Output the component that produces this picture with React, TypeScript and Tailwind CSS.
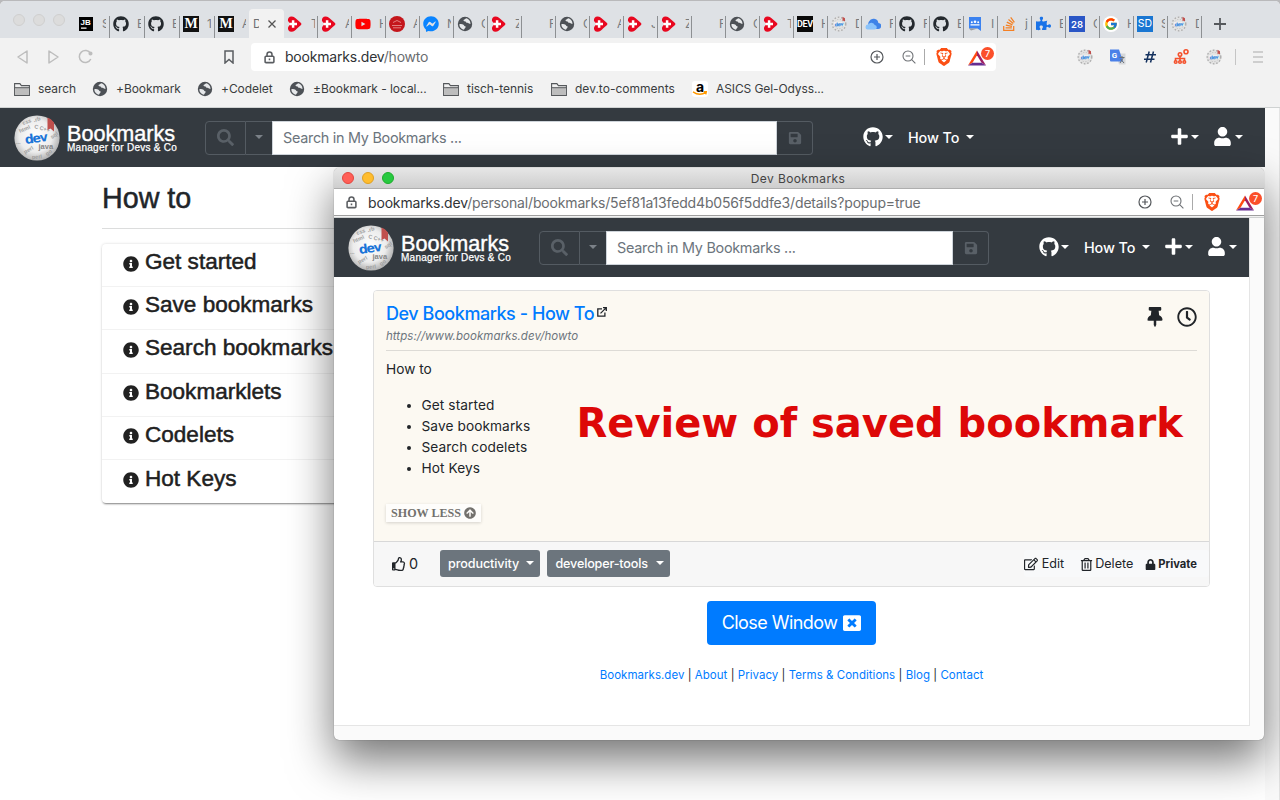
import React from "react";
import {
  FaArrowCircleUp,
  FaFacebookMessenger,
  FaGithub,
  FaInfoCircle,
  FaLock,
  FaPlus,
  FaPuzzlePiece,
  FaRegClock,
  FaRegEdit,
  FaRegThumbsUp,
  FaRegTrashAlt,
  FaSave,
  FaSearch,
  FaStackOverflow,
  FaThumbtack,
  FaUser,
  FaWindowClose,
  FaYoutube,
} from "react-icons/fa";
import { FcGoogle } from "react-icons/fc";
import { SiBrave } from "react-icons/si";

const SANS = "font-['Inter','Liberation_Sans',sans-serif]";
const HELV = "font-['Liberation_Sans',sans-serif]";

function Caret({ className = "text-white" }: { className?: string }) {
  return (
    <svg viewBox="0 0 8 4" className={`h-[4px] w-[8px] shrink-0 ${className}`}>
      <path d="M0 0h8L4 4z" fill="currentColor" />
    </svg>
  );
}

function DevBall({ className }: { className: string }) {
  return (
    <svg viewBox="0 0 46 46" className={`shrink-0 ${className}`}>
      <defs>
        <radialGradient id="ball" cx="47%" cy="45%" r="56%">
          <stop offset="0" stopColor="#ffffff" />
          <stop offset="0.65" stopColor="#ececec" />
          <stop offset="1" stopColor="#b0b0b0" />
        </radialGradient>
      </defs>
      <circle cx="23" cy="23" r="22.6" fill="url(#ball)" />
      <g fontFamily="Liberation Sans" fontWeight="bold" fill="#9c9c9c" fontSize="5.500">
        <text x="6" y="18" transform="rotate(-24 6 18)">html</text>
        <text x="9" y="10" transform="rotate(-18 9 10)">css</text>
        <text x="20" y="13" transform="rotate(16 20 13)">C C++</text>
        <text x="20" y="7" transform="rotate(-14 20 7)">.rb</text>
        <text x="2" y="29">...</text>
        <text x="11" y="39" transform="rotate(-30 11 39)">perl</text>
        <text x="18" y="44" transform="rotate(-4 18 44)">perl</text>
        <text x="38" y="24" transform="rotate(-35 38 24)">sql</text>
        <text x="33" y="41" transform="rotate(-35 33 41)">go</text>
      </g>
      <text x="24.500" y="34" fontFamily="Liberation Sans" fontWeight="bold" fontSize="7.5" fill="#858585">java</text>
      <text x="11.500" y="29" transform="rotate(-8 11.500 29)" fontFamily="DejaVu Sans" fontWeight="bold" fontSize="12.5" textLength="23" fill="#1b75d8">dev</text>
      <path d="M33.5 2.5q3.500 1 6.500 5v9l-3.500-3-3 1.500z" fill="#c0504d" />
    </svg>
  );
}

function MiniBall() {
  return (
    <svg viewBox="0 0 16 16" className="size-4 shrink-0">
      <circle cx="8" cy="8" r="7.600" fill="#e3e3e3" />
      <circle cx="8" cy="8" r="6.800" fill="none" stroke="#aaa" strokeWidth="1.300" strokeDasharray="1.600 1.800" />
      <circle cx="8" cy="8" r="4.700" fill="none" stroke="#bbb" strokeWidth="0.800" strokeDasharray="1.300 1.500" />
      <rect x="3" y="5.800" width="10" height="4.200" fill="#efefef" />
      <text x="3.500" y="10" transform="rotate(-6 8 8)" fontFamily="DejaVu Sans" fontWeight="bold" fontSize="5" textLength="9" fill="#2f84dc">dev</text>
      <path d="M11.500.8l2.500 1.500v3.200l-1.300-.8-1.200.3z" fill="#c0504d" />
    </svg>
  );
}

function Heart() {
  return (
    <svg viewBox="0 0 16 16" className="size-4 shrink-0">
      <path d="M4.500 0.400C7 .4 8.500 2 10 3.600L14 7.100q.9.900 0 1.800L10 12.500C8.400 14.200 7 15.800 4.500 15.800 1.800 15.800.8 13.700 1 11.900c.1-1.500 1.600-2.200 1.600-3.900S1 5.500.9 4.200C.8 2.300 2 .4 4.500.4z" fill="#e8071f" />
      <path d="M2.200 8h7.800M6.100 4.200v7.600" stroke="#fff" strokeWidth="2.500" />
    </svg>
  );
}

function Globe() {
  return (
    <svg viewBox="0 0 16 16" className="size-4 shrink-0">
      <circle cx="8" cy="8" r="7.200" fill="#4d5156" />
      <path d="M2.300 8.200c1.500-.3 3.200-.2 4.200.5.900.6.500 1.300 1.500 1.500 1 .2 1 1 .2 1.600-.7.500-.5 1.600-1.400 1.900C4.200 13 2.300 11 2.300 8.200zM9.400 2.300c-1.200.2-1 1.100-2 1.300-.9.200-1.300 1-.5 1.500.6.400 1.600.3 2 1 .3.700 1.300.9 2.100.9.900 0 1.300 1 2.500.9C13.500 5 11.700 2.800 9.400 2.300z" fill="#e6e8ea" />
    </svg>
  );
}

function Square({ bg, children }: { bg: string; children: React.ReactNode }) {
  return <span className={`flex size-4 shrink-0 items-center justify-center leading-none text-white ${bg}`}>{children}</span>;
}

const medium = (
  <Square bg="bg-[#111]">
    <span className="pt-[1px] font-['Liberation_Serif',serif] text-[14px] font-bold leading-none">M</span>
  </Square>
);
const github = <FaGithub className="size-4 shrink-0 text-[#24292e]" />;

const leftTabs: [React.ReactNode, string][] = [
  [
    <svg viewBox="0 0 14 14" className="size-[14px] shrink-0">
      <path d="M0 0h14v14H0z" />
      <text x="1.500" y="8.200" fontFamily="Liberation Sans" fontWeight="bold" fontSize="8" fill="#fff">JB</text>
      <path d="M2 11.200h5.500" stroke="#fff" strokeWidth="1.200" />
    </svg>,
    "S",
  ],
  [github, "B"],
  [github, "B"],
  [medium, "1"],
  [medium, "A"],
];

const rightTabs: [React.ReactNode, string][] = [
  [<Heart />, "T"],
  [<Heart />, "A"],
  [<FaYoutube className="size-4 shrink-0 text-[#f00]" />, "H"],
  [
    <svg viewBox="0 0 16 16" className="size-4 shrink-0">
      <circle cx="8" cy="8" r="8" fill="#c4161c" />
      <path d="M4 6.500l4-2 4 2M3 9.500h10M4 11.800h8" stroke="#e8999b" fill="none" strokeWidth=".8" />
    </svg>,
    "A",
  ],
  [<FaFacebookMessenger className="size-4 shrink-0 text-[#0a84ff]" />, "N"],
  [<Globe />, "C"],
  [<Heart />, "Z"],
  [<span className="size-4 shrink-0" />, "F"],
  [<Globe />, "C"],
  [<Heart />, "A"],
  [<Heart />, "J"],
  [<Heart />, "Z"],
  [<span className="size-4 shrink-0" />, "F"],
  [<Globe />, "C"],
  [<Heart />, "T"],
  [
    <Square bg="bg-[#0a0a0a]">
      <span className="pt-[1px] font-['Roboto',sans-serif] text-[9px] font-bold tracking-[-0.3px]">DEV</span>
    </Square>,
    "H",
  ],
  [<MiniBall />, "D"],
  [
    <svg viewBox="0 0 16 16" className="size-4 shrink-0">
      <path d="M6 13h7a3 3 0 0 0 .4-6A5 5 0 0 0 4 5.500 4 4 0 0 0 3.500 9z" fill="#3f83e8" />
      <path d="M2.800 13.500h6.700a2.200 2.200 0 0 0 .2-4.400A3.500 3.500 0 0 0 3.300 8.500a2.500 2.500 0 0 0-.5 5z" fill="#8cc4fb" />
    </svg>,
    "F",
  ],
  [github, "F"],
  [github, "B"],
  [
    <svg viewBox="0 0 16 16" className="size-4 shrink-0">
      <path d="M2 1h12v14l-3.500-2.500H2z" fill="#3b82f0" />
      <path d="M2 12.500h8.500L4 14.500z" fill="#9a9a9a" />
      <circle cx="8" cy="5.700" r="1.300" fill="#fff" />
      <circle cx="4.800" cy="6.300" r="1" fill="#fff" />
      <circle cx="11.200" cy="6.300" r="1" fill="#fff" />
      <path d="M3.500 9.500V8.300h9v1.200z" fill="#fff" />
    </svg>,
    "I",
  ],
  [<FaStackOverflow className="size-4 shrink-0 text-[#f48024]" />, "j"],
  [<FaPuzzlePiece className="size-[15px] shrink-0 text-[#1a73e8]" />, "E"],
  [
    <Square bg="bg-[#2a56c6]">
      <span className="pt-[2px] text-[9.5px] font-semibold">28</span>
    </Square>,
    "C",
  ],
  [
    <span className="flex size-4 shrink-0 items-center justify-center rounded-full bg-white">
      <FcGoogle className="size-[14px]" />
    </span>,
    "H",
  ],
  [
    <Square bg="bg-[#1976d2]">
      <span className="pt-[1px] text-[10.5px]">SD</span>
    </Square>,
    "S",
  ],
  [<MiniBall />, "D"],
];

function Tab({ icon, letter, wide }: { icon: React.ReactNode; letter: string; wide?: boolean }) {
  return (
    <div className={`flex h-full shrink-0 items-center ${wide ? "w-[35px]" : "w-[34px]"}`}>
      <span className="ml-[3px] flex w-4 shrink-0 justify-center">{icon}</span>
      <span className="ml-[8px] w-[4px] shrink-0 overflow-hidden text-[12px] text-[#777a7e]">{letter}</span>
    </div>
  );
}

function TabStrip() {
  return (
    <div className="flex h-[37px] shrink-0 items-end bg-[#dee1e5]">
      <div className="flex h-[37px] w-[75px] shrink-0 items-center gap-2 pl-[13px]">
        {[0, 1, 2].map((i) => (
          <span key={i} className="size-3 rounded-full border border-[#cfcfcf] bg-[#dcdcdc]" />
        ))}
      </div>
      <div className="flex h-[29px] w-[174px] shrink-0">
        {leftTabs.map(([icon, letter], i) => (
          <div key={i} className="relative flex h-[29px] shrink-0 items-center">
            <Tab icon={icon} letter={letter} wide />
            {i < 4 && <span className="absolute right-0 top-[7px] h-[22px] w-px bg-[#8d9093]" />}
          </div>
        ))}
      </div>
      <div className="flex h-[29px] w-[35px] shrink-0 items-center rounded-t-[4px] bg-[#f2f2f2] pl-[4px]">
        <span className="w-[6px] overflow-hidden text-[12px] text-[#6d6f72]">D</span>
        <svg viewBox="0 0 8 8" className="ml-[9px] size-2">
          <path d="M.5.5l7 7M7.500.5l-7 7" stroke="#555" strokeWidth="1.300" />
        </svg>
      </div>
      <div className="flex h-[29px]">
        {rightTabs.map(([icon, letter], i) => (
          <div key={i} className="relative flex h-[29px] shrink-0 items-center">
            <Tab icon={icon} letter={letter} />
            <span className="absolute right-0 top-[7px] h-[22px] w-px bg-[#8d9093]" />
          </div>
        ))}
      </div>
      <div className="flex h-[29px] w-[36px] items-center justify-center">
        <svg viewBox="0 0 12 12" className="size-3">
          <path d="M6 0v12M0 6h12" stroke="#55585c" strokeWidth="1.800" />
        </svg>
      </div>
    </div>
  );
}

function PadLock() {
  return (
    <svg viewBox="0 0 12 14" className="h-[13px] w-[11px] shrink-0" fill="none" stroke="#5a5d61" strokeWidth="1.700">
      <rect x="1.200" y="5.600" width="9.600" height="7" rx="1" />
      <path d="M3.300 5.500V3.700a2.700 2.700 0 0 1 5.400 0v1.800M6 8.200v1.800" />
    </svg>
  );
}

function UrlActions({ className }: { className: string }) {
  return (
    <div className={`flex h-full shrink-0 items-center ${className}`}>
      <svg viewBox="0 0 14 14" className="size-[14px] shrink-0" fill="none" stroke="#55585c" strokeWidth="1.200">
        <circle cx="7" cy="7" r="6" />
        <path d="M7 4v6M4 7h6" />
      </svg>
      <svg viewBox="0 0 14 14" className="ml-[18px] size-[14px] shrink-0" fill="none" stroke="#6f7276" strokeWidth="1.100">
        <circle cx="6" cy="6" r="5" />
        <path d="M3.700 6h4.600M9.700 9.700l3.700 3.700" />
      </svg>
      <span className="ml-[8px] h-[16px] w-px shrink-0 bg-[#aaa]" />
      <SiBrave className="ml-[10px] size-[18px] shrink-0 text-[#fb4f14]" />
      <span className="relative ml-[15px] h-[18px] w-[26px] shrink-0">
        <svg viewBox="0 0 18 16" className="absolute bottom-0 left-0 h-4 w-[18px]">
          <path d="M9 .5L0 15.500l4.500-2.800L9 5.300z" fill="#ff4b12" />
          <path d="M9 .5l9 15-4.500-2.800L9 5.300z" fill="#9e1f63" />
          <path d="M0 15.500h18l-4.500-2.800h-9z" fill="#662d91" />
        </svg>
        <span className="absolute -top-[1px] right-0 flex size-[13px] items-center justify-center rounded-full bg-[#fb4f2a] text-[9px] leading-none font-medium text-white">7</span>
      </span>
    </div>
  );
}

function AddressBar() {
  const gray = "#bdbdbd";
  return (
    <div className="flex h-[38px] shrink-0 items-center">
      <svg viewBox="0 0 76 16" className="ml-[15px] h-4 w-[79px] shrink-0" fill="none" stroke={gray} strokeWidth="1.500" strokeLinejoin="round">
        <path d="M10.500 2v12L1.500 8zM32.500 2v12l9-6z" />
        <path d="M75 4.500A6 6 0 1 0 75.300 10" transform="translate(-1 0)" />
        <circle cx="74" cy="4.500" r="1.300" fill={gray} />
      </svg>
      <svg viewBox="0 0 10 14" className="ml-[130px] h-[14px] w-[10px] shrink-0" fill="none" stroke="#5a5d61" strokeWidth="1.500">
        <path d="M1 1h8v12L5 9.500 1 13z" />
      </svg>
      <div className="ml-[17px] flex h-[28px] w-[745px] shrink-0 items-center rounded-[4px] bg-white pl-[13px]">
        <PadLock />
        <span className="ml-[10px] pb-px text-[14px] tracking-[-0.2px] text-[#303336]">
          bookmarks.dev<span className="text-[#6a6d70]">/howto</span>
        </span>
        <UrlActions className="ml-auto pr-[2px]" />
      </div>
      <div className="ml-[81px] flex w-[145px] items-center justify-between">
        <MiniBall />
        <svg viewBox="0 0 16 16" className="size-4">
          <path d="M6 4.500h9.500V15.500H9z" fill="#d5d7da" />
          <path d="M0 .5h9l4 12H1a1 1 0 0 1-1-1z" fill="#4a80e8" />
          <text x="1.800" y="9" fontFamily="Roboto" fontWeight="bold" fontSize="8" fill="#fff">G</text>
          <path d="M9.500 8.500h5M12 7v1.500M10 14l3.500-5.500M10.500 10l3.500 4" stroke="#687078" strokeWidth="1" />
        </svg>
        <svg viewBox="0 0 12 12" className="size-[12px]" stroke="#14315e" strokeWidth="1.500">
          <path d="M5.200.5l-3 11M9.500.5l-3 11M1.500 3.700H12M0 8.300h10.500" />
        </svg>
        <svg viewBox="0 0 16 16" className="size-4">
          <g stroke="#f4512c" fill="none" strokeWidth="1.600">
            <circle cx="7" cy="5.500" r="1.700" />
            <path d="M7 7v5M2.500 12V9.500h9V12" />
            <circle cx="2.700" cy="13" r="1.300" />
            <circle cx="7" cy="13" r="1.300" />
            <circle cx="11.300" cy="13" r="1.300" />
            <circle cx="13" cy="2.800" r="2" />
          </g>
        </svg>
        <MiniBall />
      </div>
      <span className="ml-[13px] h-[16px] w-px bg-[#c5c5c5]" />
      <svg viewBox="0 0 10 12" className="ml-[17px] h-3 w-[10px]">
        <path d="M0 1h10M0 6h10M0 11h10" stroke="#c2c2c2" strokeWidth="1.500" />
      </svg>
    </div>
  );
}

function Folder() {
  return (
    <svg viewBox="0 0 16 13" className="h-[13px] w-4 shrink-0">
      <path d="M.6 12.400V.6h5.300l1.500 2h8v9.800z" fill="#f2f2f2" stroke="#55585b" strokeWidth="1.100" />
      <path d="M1.100 5h13.800v6.900H1.100z" fill="#bdbdbd" />
      <path d="M.6 4.700h14.800" stroke="#55585b" />
    </svg>
  );
}

function BookmarksBar() {
  const item = "flex shrink-0 items-center";
  return (
    <div className="flex h-[31px] shrink-0 items-center pb-[5px] pl-[14px] text-[12px] tracking-[-0.05px] whitespace-nowrap text-[#3a3d40]">
      <div className={`${item} w-[78px] gap-2`}><Folder />search</div>
      <div className={`${item} w-[105px] gap-2`}><Globe />+Bookmark</div>
      <div className={`${item} w-[92px] gap-2`}><Globe />+Codelet</div>
      <div className={`${item} w-[154px] gap-2`}><Globe /><span>±Bookmark - local...</span></div>
      <div className={`${item} w-[108px] gap-2`}><Folder />tisch-tennis</div>
      <div className={`${item} w-[141px] gap-2`}><Folder /><span className="tracking-[0.02px]">dev.to-comments</span></div>
      <div className={`${item} gap-2`}>
        <span className="relative flex size-4 justify-center rounded-[3px] bg-white text-[14px] leading-[11px] font-bold text-black">
          a
          <svg viewBox="0 0 16 5" className="absolute bottom-[1px] left-0 h-[5px] w-4">
            <path d="M1 .8q6.500 4.500 13 .5M11.800.8l2.500 0-.5 2.500" stroke="#ff9900" fill="none" strokeWidth="1.400" />
          </svg>
        </span>
        <span className="tracking-[-0.1px]">ASICS Gel-Odyss...</span>
      </div>
    </div>
  );
}

function NavBar({ input, menu }: { input: string; menu: React.ReactNode }) {
  return (
    <div className="flex h-[59px] shrink-0 items-center bg-[#343a40] pl-[14px]">
      <DevBall className="size-[46px]" />
      <div className={`ml-[7px] w-[138px] shrink-0 text-white whitespace-nowrap ${HELV}`}>
        <div className="pt-px text-[21.6px] leading-[21px] [-webkit-text-stroke:0.4px_white]">Bookmarks</div>
        <div className="pb-px text-[10px] leading-[8px] tracking-[0.27px] [-webkit-text-stroke:0.25px_white]">Manager for Devs &amp; Co</div>
      </div>
      <div className="flex h-[34px] shrink-0">
        <span className="flex w-[41px] items-center justify-center rounded-l-[4px] border border-[#545b62]">
          <FaSearch className="size-[17px] text-[#596067]" />
        </span>
        <span className="flex w-[26px] items-center justify-center border-y border-[#545b62] pr-px pb-[2px]">
          <Caret className="text-[#7b8188]" />
        </span>
        <span className={`flex items-center border border-[#ced4da] bg-white pl-[10px] text-[14.4px] tracking-[-0.28px] text-[#6c757d] ${input}`}>Search in My Bookmarks ...</span>
        <span className="flex w-[36px] items-center justify-center rounded-r-[4px] border border-l-0 border-[#545b62]">
          <FaSave className="size-[14px] text-[#596067]" />
        </span>
      </div>
      {menu}
    </div>
  );
}

function NavMenu({ gap }: { gap: string }) {
  return (
    <div className="ml-[50px] flex shrink-0 items-center text-white">
      <FaGithub className="mb-px size-[20px]" />
      <Caret className="mb-px ml-[2px]" />
      <span className="ml-[15px] w-[58px] text-[14.4px] font-medium tracking-[-0.1px] whitespace-nowrap">How To</span>
      <Caret className="mb-px" />
      <FaPlus className={`mb-px size-[19px] ${gap}`} />
      <Caret className="mb-px ml-[2px]" />
      <FaUser className="mb-px ml-[14px] size-[19px]" />
      <Caret className="mb-px ml-[3px]" />
    </div>
  );
}

const topics = ["Get started", "Save bookmarks", "Search bookmarks", "Bookmarklets", "Codelets", "Hot Keys"];

function MainPage() {
  return (
    <div className="flex min-h-0 flex-1">
      <div className="flex w-[1265px] shrink-0 flex-col bg-white">
        <NavBar input="w-[505px]" menu={<NavMenu gap="ml-[196px]" />} />
        <div className={`ml-[102px] w-[1060px] ${HELV}`}>
          <h1 className="flex h-[62px] items-center border-b border-[#dcdddd] pt-[3px] text-[28.7px] text-[#212529] [-webkit-text-stroke:0.5px_#212529]">How to</h1>
          <div className="mt-[15px] rounded-[4px] bg-white shadow-[0_2px_2px_-1px_rgba(0,0,0,0.45),0_0_3px_rgba(0,0,0,0.16)]">
            {topics.map((t) => (
              <div key={t} className="flex h-[43.2px] items-center border-b border-[#f2f2f2] pl-[21px] text-[22.55px] text-[#212121] last:border-b-0 [-webkit-text-stroke:0.5px_#212121]">
                <FaInfoCircle className="mb-[3px] size-[16px]" />
                <span className="ml-[6px] pb-[6px] leading-[28px] whitespace-nowrap">{t}</span>
              </div>
            ))}
          </div>
        </div>
      </div>
      <div className="flex-1 border-r border-[#e4e4e4] bg-[#fafafa]" />
    </div>
  );
}

const links = ["Bookmarks.dev", "About", "Privacy", "Terms & Conditions", "Blog", "Contact"];

function BookmarkCard() {
  return (
    <div className="mt-[13px] ml-[39px] w-[837px] shrink-0 overflow-hidden rounded-[4px] border border-[#dfdfdf]">
      <div className="h-[251px] border-b border-[#d8d8d8] bg-[#fcf9f2] px-[12px] text-[#212529]">
        <div className="flex h-[60px] border-b border-[#dddbd6]">
          <div className="flex-1">
            <div className="flex pt-[9px] text-[18px] leading-[27px] font-medium tracking-[-0.45px] text-[#007bff]">
              Dev Bookmarks - How To
              <svg viewBox="0 0 10 10" className="mt-[7px] ml-[3px] size-[10px]" fill="none" stroke="#212529" strokeWidth="1.300">
                <path d="M5 1.800H.8v7.400h7.100V5.600M3.500 6.400L9 .9M6 .7h3.300V4" />
              </svg>
            </div>
            <div className="pt-px text-[11.5px] leading-[17px] tracking-[0.04px] text-[#6c757d] italic">https://www.bookmarks.dev/howto</div>
          </div>
          <FaThumbtack className="mt-[16px] h-[20px] w-[16px]" />
          <FaRegClock className="mt-[16px] ml-[14px] size-[20px]" />
        </div>
        <p className="pt-[8px] text-[13.7px] leading-[21px]">How to</p>
        <ul className="mt-[15px] list-disc pl-[35.5px] text-[13.7px] leading-[21px] tracking-[0.08px]">
          <li>Get started</li>
          <li>Save bookmarks</li>
          <li>Search codelets</li>
          <li>Hot Keys</li>
        </ul>
        <div className="mt-[25px] flex h-[18px] w-[95px] items-center gap-[3px] bg-white/70 pl-[5px] font-['Liberation_Serif',serif] text-[12.1px] font-bold whitespace-nowrap text-[#73716d] shadow-[0_1px_3px_rgba(0,0,0,0.16)]">
          SHOW LESS
          <FaArrowCircleUp className="size-[12px] shrink-0" />
        </div>
      </div>
      <div className="flex h-[44px] items-center bg-[#f7f7f7] pb-[1px] text-[12.6px] text-[#212529]">
        <FaRegThumbsUp className="ml-[18px] size-[14px]" />
        <span className="ml-[3px] w-[31px] text-[14.4px]">0</span>
        <span className="flex h-[27px] w-[100px] items-center justify-between rounded-[3px] bg-[#6c757d] pt-px pr-[6px] pl-[8px] font-medium tracking-[-0.1px] text-white">productivity<Caret className="mb-[2px]" /></span>
        <span className="ml-[7px] flex h-[27px] w-[123px] items-center justify-between rounded-[3px] bg-[#6c757d] pt-px pr-[6px] pl-[8.5px] font-medium tracking-[-0.17px] text-white">developer-tools<Caret className="mb-[2px]" /></span>
        <div className="ml-auto flex h-[27px] items-center rounded-[3px] bg-[#f8f9fa] pt-px pr-[12px]">
          <FaRegEdit className="size-[14px]" />
          <span className="ml-[4px]">Edit</span>
          <FaRegTrashAlt className="ml-[16px] size-[13px]" />
          <span className="ml-[2px]">Delete</span>
          <FaLock className="ml-[12px] size-[11px]" />
          <span className="ml-[2px] text-[11.2px] font-bold">Private</span>
        </div>
      </div>
    </div>
  );
}

function Popup() {
  return (
    <div className="absolute top-[168px] left-[334px] flex h-[572px] w-[930px] flex-col overflow-visible rounded-[5px] bg-[#fafafa] shadow-[0_0_1px_rgba(0,0,0,0.6),0_20px_45px_rgba(0,0,0,0.55)]">
      <div className="flex h-[21px] shrink-0 items-center rounded-t-[5px] border-b border-[#aeaeae] bg-linear-to-b from-[#e6e6e6] to-[#cecece] pl-[8px]">
        <span className="size-3 rounded-full border border-[#e2463f] bg-[#ff5f57]" />
        <span className="ml-2 size-3 rounded-full border border-[#dfa023] bg-[#ffbd2e]" />
        <span className="ml-2 size-3 rounded-full border border-[#1dad2b] bg-[#28c940]" />
        <span className="flex-1 pt-px pr-[62px] text-center text-[12px] tracking-[0.4px] text-[#444]">Dev Bookmarks</span>
      </div>
      <div className="flex h-[27px] shrink-0 items-center border-b border-[#9f9f9f] bg-white pl-[12px]">
        <PadLock />
        <span className="ml-[11px] text-[14px] tracking-[-0.165px] whitespace-nowrap text-[#303336]">
          bookmarks.dev<span className="text-[#6a6d70]">/personal/bookmarks/5ef81a13fedd4b056f5ddfe3/details?popup=true</span>
        </span>
        <UrlActions className="ml-auto pr-[2px]" />
      </div>
      <div className="h-[2px] shrink-0 border-b border-[#cfd2d2] bg-[#f2f2f2]" />
      <div className="flex h-[508px] w-[916px] shrink-0 flex-col border-r border-b border-[#e5e5e5] bg-white">
        <NavBar input="w-[347px]" menu={<NavMenu gap="ml-[14px]" />} />
        <BookmarkCard />
        <button className="mt-[14px] ml-[373px] flex h-[44px] w-[169px] shrink-0 items-center justify-center rounded-[4px] bg-[#007bff] pb-px text-[18px] tracking-[-0.55px] whitespace-nowrap text-white">
          Close Window <FaWindowClose className="ml-[6px] size-[18px]" />
        </button>
        <div className="mt-[22px] flex justify-center text-[11.5px] leading-[17px] tracking-[0.03px] whitespace-pre text-[#212529]">
          {links.map((l, i) => (
            <span key={l}>
              {i > 0 && " | "}
              <a className="text-[#007bff]">{l}</a>
            </span>
          ))}
        </div>
      </div>
      <div className="absolute top-[227px] left-[242.5px] font-['DejaVu_Sans',sans-serif] text-[40px] leading-[56px] font-bold whitespace-nowrap text-[#dd0808]">Review of saved bookmark</div>
    </div>
  );
}

export default function App() {
  return (
    <div className={`relative flex h-[800px] w-[1280px] flex-col overflow-hidden bg-[#b9b9bb] pt-px ${SANS}`}>
      <div className="flex min-h-0 flex-1 flex-col overflow-hidden rounded-t-[5px] bg-[#f2f2f2]">
        <TabStrip />
        <AddressBar />
        <BookmarksBar />
        <div className="h-px shrink-0 bg-[#cfd2d2]" />
        <MainPage />
      </div>
      <Popup />
    </div>
  );
}
